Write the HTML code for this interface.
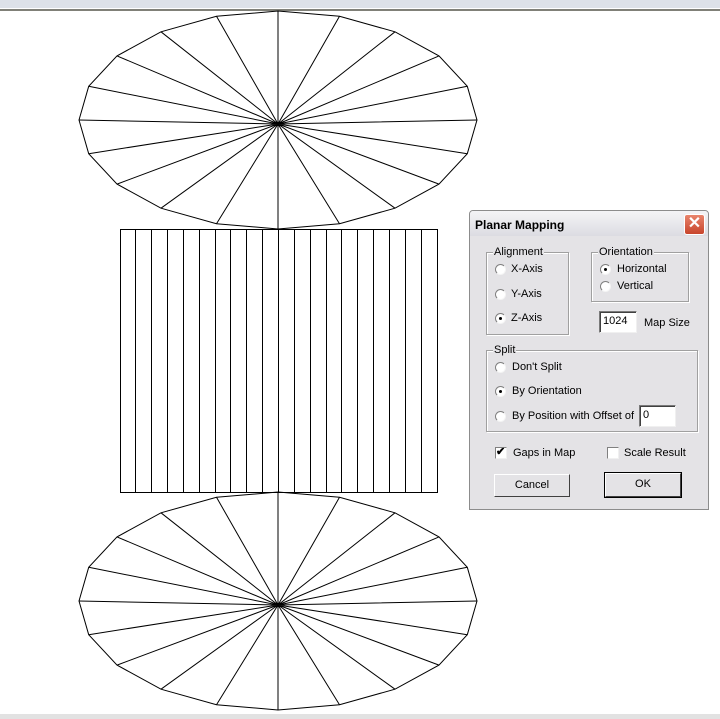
<!DOCTYPE html>
<html><head><meta charset="utf-8"><style>
body{margin:0;width:720px;height:719px;background:#fff;position:relative;overflow:hidden;font-family:"Liberation Sans",sans-serif;font-size:11px;color:#000}
.a{position:absolute}
.grp{position:absolute;border:1px solid #a0a0a0;box-shadow:1px 1px 0 #fff inset, 1px 1px 0 #fff}
.lg{position:absolute;top:-7px;left:6px;background:#e4e3e6;padding:0 1px;line-height:12px}
.rb{position:absolute;width:11px;height:11px;border-radius:50%;background:#fff;border:1px solid #8a8a8a;box-sizing:border-box;border-color:#808080 #f4f4f4 #f4f4f4 #808080}
.rb.on::after{content:"";position:absolute;left:3px;top:3px;width:3px;height:3px;border-radius:50%;background:#000}
.t{position:absolute;line-height:12px;white-space:nowrap}
.inp{position:absolute;background:#fff;border:1px solid;border-color:#7a7a7a #f0f0f0 #f0f0f0 #7a7a7a;box-shadow:inset 1px 1px 0 #404040;box-sizing:border-box;padding:2px 3px;line-height:14px}
.btn{position:absolute;background:#e4e3e6;border:1px solid;border-color:#fff #404040 #404040 #fff;box-sizing:border-box;text-align:center;line-height:20px}
.cb{position:absolute;width:12px;height:12px;background:#fff;border:1px solid;border-color:#808080 #f0f0f0 #f0f0f0 #808080;box-sizing:border-box}
</style></head><body>
<div class="a" style="left:0;top:0;width:720px;height:8px;background:#dde1e8"></div>
<div class="a" style="left:0;top:9px;width:720px;height:2px;background:#808078"></div>
<div class="a" style="left:0;top:714px;width:720px;height:5px;background:#e2e2e2"></div>
<svg class="a" style="left:0;top:0" width="720" height="719" viewBox="0 0 720 719">
<defs><g id="e" fill="none" stroke="#000" stroke-width="1">
<polygon points="278,11 339.5,16.3 395,31.8 439,55.9 467.3,86.3 477,120 467.3,153.7 439,184.1 395,208.2 339.5,223.7 278,229 216.5,223.7 161,208.2 117,184.1 88.7,153.7 79,120 88.7,86.3 117,55.9 161,31.8 216.5,16.3"/>
<path d="M278,124L278,11M278,124L339.5,16.3M278,124L395,31.8M278,124L439,55.9M278,124L467.3,86.3M278,124L477,120M278,124L467.3,153.7M278,124L439,184.1M278,124L395,208.2M278,124L339.5,223.7M278,124L278,229M278,124L216.5,223.7M278,124L161,208.2M278,124L117,184.1M278,124L88.7,153.7M278,124L79,120M278,124L88.7,86.3M278,124L117,55.9M278,124L161,31.8M278,124L216.5,16.3"/>
</g></defs>
<use href="#e"/>
<use href="#e" transform="translate(0,481)"/>
<g fill="none" stroke="#000" stroke-width="1">
<rect x="120.5" y="229.5" width="317" height="263"/>
<path d="M135.5,229V493M151.5,229V493M167.5,229V493M183.5,229V493M199.5,229V493M215.5,229V493M230.5,229V493M246.5,229V493M262.5,229V493M278.5,229V493M294.5,229V493M310.5,229V493M326.5,229V493M341.5,229V493M357.5,229V493M373.5,229V493M389.5,229V493M405.5,229V493M421.5,229V493"/>
</g>
</svg>
<!-- dialog -->
<div class="a" style="left:469px;top:210px;width:240px;height:300px;background:#e4e3e6;border:1px solid #8c8c8c;border-radius:4px 4px 0 0;box-sizing:border-box"></div>
<div class="a" style="left:470px;top:211px;width:238px;height:25px;background:linear-gradient(#f4f4f6,#dcdce2);border-radius:3px 3px 0 0"></div>
<div class="t" style="left:475px;top:219px;font-weight:bold;font-size:12px">Planar Mapping</div>
<div class="a" style="left:684px;top:214px;width:21px;height:21px;background:linear-gradient(#e8846c,#c8452c);border:1px solid #fff;border-radius:3px;box-sizing:border-box;color:#fff;text-align:center;font-size:16px;line-height:18px;font-weight:bold">✕</div>

<div class="grp" style="left:486px;top:252px;width:81px;height:81px"><span class="lg">Alignment</span></div>
<div class="rb" style="left:495px;top:264px"></div><div class="t" style="left:511px;top:263px">X-Axis</div>
<div class="rb" style="left:495px;top:289px"></div><div class="t" style="left:511px;top:288px">Y-Axis</div>
<div class="rb on" style="left:495px;top:313px"></div><div class="t" style="left:511px;top:312px">Z-Axis</div>

<div class="grp" style="left:591px;top:252px;width:96px;height:48px"><span class="lg">Orientation</span></div>
<div class="rb on" style="left:600px;top:264px"></div><div class="t" style="left:617px;top:263px">Horizontal</div>
<div class="rb" style="left:600px;top:281px"></div><div class="t" style="left:617px;top:280px">Vertical</div>

<div class="inp" style="left:599px;top:311px;width:38px;height:22px">1024</div>
<div class="t" style="left:644px;top:317px">Map Size</div>

<div class="grp" style="left:486px;top:350px;width:210px;height:80px"><span class="lg">Split</span></div>
<div class="rb" style="left:495px;top:362px"></div><div class="t" style="left:512px;top:361px">Don't Split</div>
<div class="rb on" style="left:495px;top:386px"></div><div class="t" style="left:512px;top:385px">By Orientation</div>
<div class="rb" style="left:495px;top:411px"></div><div class="t" style="left:512px;top:410px">By Position with Offset of</div>
<div class="inp" style="left:639px;top:405px;width:37px;height:22px">0</div>

<div class="cb" style="left:495px;top:447px"><span class="a" style="left:0;top:-3px;font-size:11px;font-weight:bold">✔</span></div>
<div class="t" style="left:513px;top:447px">Gaps in Map</div>
<div class="cb" style="left:607px;top:447px"></div>
<div class="t" style="left:624px;top:447px">Scale Result</div>

<div class="btn" style="left:494px;top:474px;width:76px;height:23px">Cancel</div>
<div class="btn" style="left:605px;top:473px;width:76px;height:24px;outline:1px solid #000">OK</div>
</body></html>
